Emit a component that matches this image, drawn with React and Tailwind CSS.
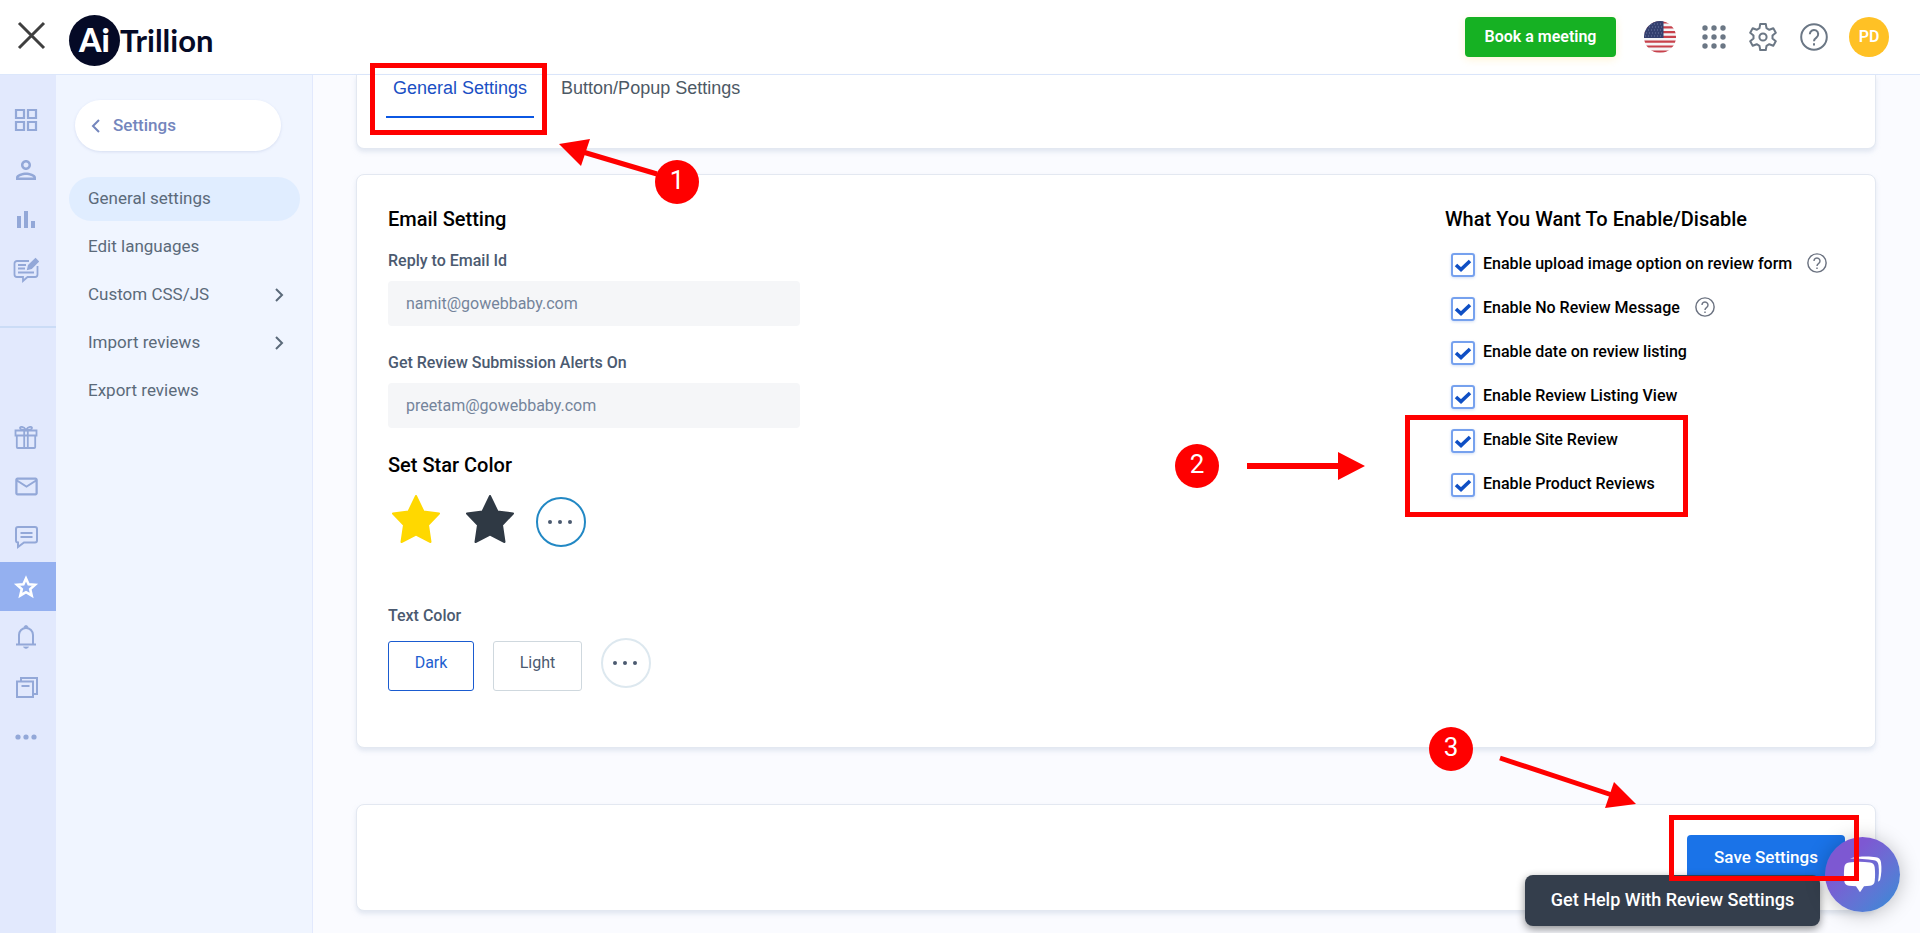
import React, { useState } from "react";
import { MdOutlineEmail, MdOutlinePerson } from "react-icons/md";

const menuItems = [
  { label: "General settings", active: true },
  { label: "Edit languages" },
  { label: "Custom CSS/JS", nested: true },
  { label: "Import reviews", nested: true },
  { label: "Export reviews" },
];

const reviewOptions = [
  { id: "upload", label: "Enable upload image option on review form", help: true },
  { id: "noreview", label: "Enable No Review Message", help: true },
  { id: "date", label: "Enable date on review listing" },
  { id: "listing", label: "Enable Review Listing View" },
  { id: "site", label: "Enable Site Review" },
  { id: "product", label: "Enable Product Reviews" },
];

/* --- ICONS --- */

function GridIcon() {
  return (
    <svg width="24" height="24" viewBox="0 0 24 24" fill="none" stroke="currentColor" strokeWidth="2.2">
      <path d="M2 2h8v8H2zM14 2h8v8h-8zM2 14h8v8H2zM14 14h8v8h-8z" />
    </svg>
  );
}

function BarsIcon() {
  return (
    <svg width="24" height="24" viewBox="0 0 24 24" fill="currentColor">
      <path d="M3 8h4v12H3zM10 3h4v17h-4zM17 13h4v7h-4z" />
    </svg>
  );
}

function ReviewIcon() {
  return (
    <svg width="26" height="26" viewBox="0 0 26 26" fill="none" stroke="currentColor" strokeWidth="1.8">
      <path d="M16 4H4a2.500 2.500 0 0 0-2.500 2.500v11A2.500 2.500 0 0 0 4 20h6v4l4.500-4H22a2.500 2.500 0 0 0 2.500-2.500V9" />
      <path d="M5 8h8M5 11.500h7M5 15.500h16" />
      <path d="M15 12l.8-3.500L22.500 2 25 4.500l-6.700 6.700z" fill="currentColor" />
    </svg>
  );
}

function GiftIcon() {
  return (
    <svg width="24" height="24" viewBox="0 0 24 24" fill="none" stroke="currentColor" strokeWidth="1.8">
      <path d="M1.500 5.500h21v5h-21zM2.800 10.500h18.400V22a1 1 0 0 1-1 1H3.800a1 1 0 0 1-1-1zM10.200 5.500V23M13.800 5.500V23" />
      <path d="M12 5C9 5 6 4.500 6 3s3.500-2 6 2c2.500-4 6-3.500 6-2s-3 2-6 2z" />
    </svg>
  );
}

function ChatLinesIcon() {
  return (
    <svg width="24" height="24" viewBox="0 0 24 24" fill="none" stroke="currentColor" strokeWidth="2">
      <path d="M4 2h17a2 2 0 0 1 2 2v11.500a2 2 0 0 1-2 2H10l-6 4.500v-4.500a2 2 0 0 1-2-2V4a2 2 0 0 1 2-2z" />
      <path d="M6.500 8h12M6.500 12h12" />
    </svg>
  );
}

function StarOutlineIcon() {
  return (
    <svg width="26" height="26" viewBox="0 0 26 26" fill="none" stroke="currentColor" strokeWidth="2.6">
      <path d="M13 4.500l2.600 5.700 6.400.6-4.800 4.300 1.500 6.400L13 18.200l-5.700 3.300 1.500-6.400L4 10.800l6.400-.6z" />
    </svg>
  );
}

function BellIcon() {
  return (
    <svg width="24" height="26" viewBox="0 0 24 26" fill="none" stroke="currentColor" strokeWidth="2">
      <path d="M2 20.500h20M5 20.500V11a7 7 0 0 1 14 0v9.500" />
      <path d="M10 3.500a2 2 0 0 1 4 0zM9.500 23h5l-1.500 1.200h-2z" fill="currentColor" strokeWidth="0.800" />
    </svg>
  );
}

function CardsIcon() {
  return (
    <svg width="24" height="24" viewBox="0 0 24 24" fill="none" stroke="currentColor" strokeWidth="2">
      <path d="M3 6.500h16V22H3zM7 6V3h16v16h-3.500M7.500 11h8" />
    </svg>
  );
}

function DotsIcon() {
  return (
    <svg width="22" height="6" viewBox="0 0 22 6" fill="currentColor">
      <circle cx="3" cy="3" r="2.600" />
      <circle cx="11" cy="3" r="2.600" />
      <circle cx="19" cy="3" r="2.600" />
    </svg>
  );
}

function SmallDots() {
  return (
    <svg width="26" height="6" viewBox="0 0 26 6" fill="#4b5a70">
      <circle cx="2" cy="3" r="2" />
      <circle cx="12" cy="3" r="2" />
      <circle cx="22" cy="3" r="2" />
    </svg>
  );
}

function Chevron({ left }) {
  return (
    <svg width="10" height="14" viewBox="0 0 10 14" fill="none" stroke="currentColor" strokeWidth="2">
      <path d={left ? "M8 1L2 7l6 6" : "M2 1l6 6-6 6"} />
    </svg>
  );
}

function HelpIcon({ size }) {
  return (
    <svg width={size} height={size} viewBox="0 0 28 28" fill="none" stroke="currentColor" strokeWidth="2">
      <circle cx="14" cy="14" r="12.800" />
      <path d="M9.800 11.200a4.200 4.200 0 1 1 6.600 3.400c-1.600 1.100-2.400 1.700-2.400 3.600" />
      <path d="M14 20.200v2.300" />
    </svg>
  );
}

function GearIcon() {
  return (
    <svg width="28" height="30" viewBox="0 0 28 30" fill="none" stroke="currentColor" strokeWidth="2" strokeLinejoin="round">
      <path d="M11.200 2h5.600l.7 4.200 2.800 1.600 4-1.500 2.500 4.400-3.300 2.800v3l3.300 2.800-2.500 4.400-4-1.500-2.800 1.600-.7 4.200h-5.600l-.7-4.200-2.800-1.600-4 1.500-2.500-4.400 3.300-2.800v-3L1.200 10.700l2.500-4.400 4 1.500 2.800-1.600z" />
      <circle cx="14" cy="15" r="3.600" />
    </svg>
  );
}

function FlagIcon() {
  return (
    <svg width="32" height="32" viewBox="0 0 32 32">
      <clipPath id="flag">
        <circle cx="16" cy="16" r="16" />
      </clipPath>
      <g clipPath="url(#flag)">
        <path fill="#f5f5f7" d="M0 0h32v32H0z" />
        <path stroke="#c8414b" strokeWidth="2.200" d="M0 1.500h32M0 6.300h32M0 11.100h32M0 15.900h32M0 20.700h32M0 25.500h32M0 30.500h32" />
        <path fill="#34406f" d="M0 0h19.500v17H0z" />
        <path stroke="#6f79a3" strokeWidth="1" strokeDasharray="1 2" d="M1 3h18M2 6h17M1 9h18M2 12h17M1 15h18" />
      </g>
    </svg>
  );
}

function AppsIcon() {
  return (
    <svg width="24" height="24" viewBox="0 0 24 24" fill="currentColor">
      {[3, 12, 21].map((y) =>
        [3, 12, 21].map((x) => <circle key={`${x}-${y}`} cx={x} cy={y} r="2.700" />)
      )}
    </svg>
  );
}

function StarShape({ color }) {
  return (
    <svg width="48" height="48" viewBox="0 0 48 48" fill={color} stroke={color} strokeWidth="2" strokeLinejoin="round">
      <path d="M24 1l7.500 15.500L47 18.500 36 30l2.500 17L24 39.500 9.500 47 12 30 1 18.500l15.500-2z" />
    </svg>
  );
}

const railTop = [
  { name: "Dashboard", icon: <GridIcon /> },
  { name: "Members", icon: <MdOutlinePerson size={30} /> },
  { name: "Reports", icon: <BarsIcon /> },
  { name: "Feedback", icon: <ReviewIcon /> },
];

const railBottom = [
  { name: "Loyalty", icon: <GiftIcon /> },
  { name: "Email", icon: <MdOutlineEmail size={27} /> },
  { name: "Messages", icon: <ChatLinesIcon /> },
  { name: "Reviews", icon: <StarOutlineIcon />, active: true },
  { name: "Notifications", icon: <BellIcon /> },
  { name: "Pages", icon: <CardsIcon /> },
  { name: "More", icon: <DotsIcon /> },
];

function RailButton({ item }) {
  return (
    <button
      aria-label={item.name}
      className={`w-full h-[49px] pr-1 flex items-center justify-center cursor-pointer ${item.active ? "bg-[#94b0f0] text-white" : "text-[#93a8d8]"}`}
    >
      {item.icon}
    </button>
  );
}

function Header() {
  return (
    <header className="h-[75px] shrink-0 bg-white border-b border-[#dce7fb] flex items-center justify-between pl-4 pr-[31px]">
      <div className="flex items-center">
        <button aria-label="Close" className="cursor-pointer pb-1">
          <svg width="31" height="31" viewBox="0 0 31 31" stroke="#3f3f3f" strokeWidth="3">
            <path d="M3 3l25 25M28 3L3 28" />
          </svg>
        </button>
        <a href="#home" className="flex items-center ml-[22px] mt-[6px] font-['Lato',sans-serif] text-[#050a26]">
          <span className="w-[51px] h-[51px] rounded-full bg-[#050a26] text-white text-[32px] font-black flex items-center justify-center">
            Ai
          </span>
          <span className="text-[31px] leading-10 font-bold">Trillion</span>
        </a>
      </div>

      <div className="flex items-center text-[#6b7785]">
        <button className="w-[151px] h-10 rounded bg-[#16b123] text-white text-[16px] font-semibold shadow-[0_2px_8px_rgba(255,193,37,0.200)] cursor-pointer">
          Book a meeting
        </button>
        <button aria-label="Language" className="ml-7 cursor-pointer">
          <FlagIcon />
        </button>
        <button aria-label="Apps" className="ml-[26px] cursor-pointer">
          <AppsIcon />
        </button>
        <button aria-label="Settings" className="ml-[23px] cursor-pointer">
          <GearIcon />
        </button>
        <button aria-label="Help" className="ml-[23px] cursor-pointer">
          <HelpIcon size={28} />
        </button>
        <button className="ml-[21px] w-10 h-10 rounded-full bg-[#ffc125] text-white text-[16px] font-semibold cursor-pointer">
          PD
        </button>
      </div>
    </header>
  );
}

function Sidebar() {
  return (
    <aside className="w-[257px] shrink-0 bg-[#f0f5ff] border-r border-[#e2e9fd] pt-[25px] pl-[13px] pr-3">
      <button className="w-[206px] h-[51px] ml-[6px] pl-4 rounded-full bg-white shadow-[0_1px_3px_rgba(116,134,189,0.200)] text-[#7486bd] text-[17px] font-medium flex items-center gap-3 cursor-pointer">
        <Chevron left />
        Settings
      </button>
      <nav className="mt-[26px] flex flex-col gap-1">
        {menuItems.map((item) => (
          <a
            key={item.label}
            href="#menu"
            className={`h-11 pl-[19px] pr-4 rounded-full text-[17px] text-[#5b6a7a] flex items-center justify-between ${item.active ? "bg-[#e0edff]" : ""}`}
          >
            {item.label}
            {item.nested && <Chevron />}
          </a>
        ))}
      </nav>
    </aside>
  );
}

function Badge({ number, className }) {
  return (
    <div className={`absolute w-11 h-11 pb-1 rounded-full bg-[#ff0000] text-white text-[26px] flex items-center justify-center ${className}`}>
      {number}
    </div>
  );
}

/* --- STEP MARKERS --- */
function Steps() {
  return (
    <div className="absolute inset-0 z-20 pointer-events-none">
      <div className="absolute left-[370px] top-[63px] w-[177px] h-[72px] border-5 border-[#ff0000]" />
      <svg className="absolute left-[559px] top-[136px]" width="100" height="44" viewBox="0 0 100 44" fill="#ff0000">
        <path d="M0 8l31-5-9 27z" />
        <path d="M24 16l74 22" stroke="#ff0000" strokeWidth="5" />
      </svg>
      <Badge number="1" className="left-[655px] top-[160px]" />

      <Badge number="2" className="right-[701px] top-[444px]" />
      <svg className="absolute right-[555px] top-[452px]" width="118" height="28" viewBox="0 0 118 28" fill="#ff0000">
        <path d="M0 11h92v6H0zM91 0l27 14-27 14z" />
      </svg>
      <div className="absolute right-[232px] top-[415px] w-[283px] h-[102px] border-5 border-[#ff0000]" />

      <Badge number="3" className="right-[447px] top-[727px]" />
      <svg className="absolute right-[284px] top-[754px]" width="138" height="56" viewBox="0 0 138 56" fill="#ff0000">
        <path d="M138 50l-22-22-9 26z" />
        <path d="M2 4l112 37" stroke="#ff0000" strokeWidth="5" />
      </svg>
      <div className="absolute right-[61px] top-[815px] w-[190px] h-[66px] border-5 border-[#ff0000]" />
    </div>
  );
}

function App() {
  const [tab, setTab] = useState("general");
  const [replyEmail, setReplyEmail] = useState("namit@gowebbaby.com");
  const [alertEmail, setAlertEmail] = useState("preetam@gowebbaby.com");
  const [enabled, setEnabled] = useState(reviewOptions.map((o) => o.id));

  const toggle = (id) =>
    setEnabled(enabled.includes(id) ? enabled.filter((e) => e !== id) : [...enabled, id]);

  return (
    <div className="relative h-screen flex flex-col overflow-hidden font-['Roboto',sans-serif] text-[16px]">
      <Header />

      <div className="flex flex-1 min-h-0">
        <div className="w-14 shrink-0 bg-[#e2e9fd] pt-5 flex flex-col gap-px">
          {railTop.map((item) => (
            <RailButton key={item.name} item={item} />
          ))}
          <hr className="mt-[31px] mb-[83px] border-t-2 border-[#cbdcf6]" />
          {railBottom.map((item) => (
            <RailButton key={item.name} item={item} />
          ))}
        </div>

        <Sidebar />

        <main className="flex-1 min-w-0 bg-[#fafbff] pl-[43px] pr-11">
          {/* Tabs */}
          <div className="h-[74px] bg-white border border-t-0 border-[#e3e8f1] rounded-b-lg shadow-[0_3px_4px_rgba(203,213,230,0.500)] pl-[29px] flex items-start gap-5 font-['Liberation_Sans',sans-serif] text-[18px]">
            <button
              onClick={() => setTab("general")}
              className={`h-[43px] px-[7px] pb-[17px] border-b-2 cursor-pointer ${tab === "general" ? "border-[#0b57e3] text-[#1a4fc4]" : "border-transparent text-[#4d5965]"}`}
            >
              General Settings
            </button>
            <button
              onClick={() => setTab("popup")}
              className={`h-[43px] px-[7px] pb-[17px] border-b-2 cursor-pointer ${tab === "popup" ? "border-[#0b57e3] text-[#1a4fc4]" : "border-transparent text-[#4d5965]"}`}
            >
              Button/Popup Settings
            </button>
          </div>

          {/* Settings */}
          <div className="mt-[25px] h-[574px] bg-white border border-[#e3e8f1] rounded-lg shadow-[0_3px_4px_rgba(203,213,230,0.500)] pt-[30px] pl-[31px] flex justify-between">
            <section className="w-[412px] text-[#4b5a70]">
              <h2 className="text-[20px] leading-7 font-medium text-black">Email Setting</h2>
              <label htmlFor="reply" className="block mt-4 leading-6 font-medium">
                Reply to Email Id
              </label>
              <input
                id="reply"
                type="email"
                value={replyEmail}
                onChange={(e) => setReplyEmail(e.target.value)}
                className="block mt-2 w-full h-[45px] px-[18px] rounded bg-[#f5f6f8] text-[#74849b] outline-none"
              />
              <label htmlFor="alerts" className="block mt-[25px] leading-6 font-medium">
                Get Review Submission Alerts On
              </label>
              <input
                id="alerts"
                type="email"
                value={alertEmail}
                onChange={(e) => setAlertEmail(e.target.value)}
                className="block mt-2 w-full h-[45px] px-[18px] rounded bg-[#f5f6f8] text-[#74849b] outline-none"
              />

              <h2 className="mt-[23px] text-[20px] leading-7 font-medium text-black">Set Star Color</h2>
              <div className="mt-4 pl-1 flex items-start">
                <button aria-label="Yellow star" className="cursor-pointer">
                  <StarShape color="#ffd800" />
                </button>
                <button aria-label="Dark star" className="ml-[26px] cursor-pointer">
                  <StarShape color="#2f3944" />
                </button>
                <button
                  aria-label="More star colors"
                  className="ml-[22px] mt-[2px] w-[50px] h-[50px] rounded-full border-2 border-[#2288c4] flex items-center justify-center cursor-pointer"
                >
                  <SmallDots />
                </button>
              </div>

              <h3 className="mt-[57px] leading-6 font-medium">Text Color</h3>
              <div className="mt-[10px] flex items-start">
                <button className="mt-[3px] w-[86px] h-[50px] pb-[6px] rounded-[3px] border border-[#1a5bd0] text-[#1f5fd0] cursor-pointer">
                  Dark
                </button>
                <button className="ml-[19px] mt-[3px] w-[89px] h-[50px] pb-[6px] rounded-[3px] border border-[#cfd8de] cursor-pointer">
                  Light
                </button>
                <button
                  aria-label="More text colors"
                  className="ml-[19px] w-[50px] h-[50px] rounded-full border-2 border-[#dde8ef] flex items-center justify-center cursor-pointer"
                >
                  <SmallDots />
                </button>
              </div>
            </section>

            <section className="w-[430px] text-black">
              <h2 className="text-[20px] leading-7 font-medium">What You Want To Enable/Disable</h2>
              <ul className="mt-[9px] pl-[6px]">
                {reviewOptions.map((option) => (
                  <li key={option.id} className="h-11 flex items-center">
                    <span className="relative mt-[2px] w-6 h-6 shrink-0">
                      <input
                        id={option.id}
                        type="checkbox"
                        checked={enabled.includes(option.id)}
                        onChange={() => toggle(option.id)}
                        className="peer block appearance-none w-6 h-6 rounded-[3px] border-2 border-[#76a1ee] bg-white shadow-[0_1px_3px_rgba(26,91,208,0.200)] cursor-pointer"
                      />
                      <svg className="absolute inset-0 hidden peer-checked:block pointer-events-none" width="24" height="24" viewBox="0 0 24 24" fill="none" stroke="#0f4fc4" strokeWidth="3.6">
                        <path d="M5 12l5 4.500L19 8" />
                      </svg>
                    </span>
                    <label htmlFor={option.id} className="ml-2 font-medium cursor-pointer">
                      {option.label}
                    </label>
                    {option.help && (
                      <button aria-label="More info" className="ml-[15px] mb-[3px] text-[#6b7280] cursor-pointer">
                        <HelpIcon size={20} />
                      </button>
                    )}
                  </li>
                ))}
              </ul>
            </section>
          </div>

          {/* Save bar */}
          <div className="mt-[56px] h-[107px] bg-white border border-[#e3e8f1] rounded-lg shadow-[0_3px_4px_rgba(203,213,230,0.500)] pt-[30px] pr-[30px] flex items-start justify-end">
            <button className="w-[158px] h-[46px] rounded bg-[#1a73e8] text-white text-[17px] font-medium cursor-pointer">
              Save Settings
            </button>
          </div>
        </main>
      </div>

      {/* Floating help */}
      <button className="absolute z-10 right-[100px] top-[875px] w-[295px] h-[51px] pb-[2px] rounded-lg bg-[#343e4c] text-white text-[18px] font-medium shadow-[0_3px_8px_rgba(0,0,0,0.450)] cursor-pointer">
        Get Help With Review Settings
      </button>
      <button
        aria-label="Open chat"
        className="absolute z-10 right-5 top-[837px] w-[75px] h-[75px] rounded-full bg-linear-to-br from-[#7d58d2] from-30% to-[#3d86d6] to-90% shadow-[0_2px_20px_rgba(0,0,0,0.250)] flex items-center justify-center cursor-pointer"
      >
        <svg width="40" height="40" viewBox="0 0 40 40" fill="#fff">
          <path d="M7 3.500C15 1 27 1.200 33 2.200c3 .6 4.500 2 5 5 .8 6 .5 12-1 18l-2 1.500c1-6 1.200-11 .5-16.500-.4-3-1.700-4.500-4.500-5C24 4 15 3.500 7 3.500z" />
          <path d="M6 7.500c7-1 14-1 21 0 3 .4 4.400 2 4.700 4.700.5 5 .5 9 0 13.800-.3 3-1.700 4.300-4.700 4.700l-6 .6-4 6-4-6-7-.6C3 30.300 1.600 29 1.300 26c-.5-5-.5-9 0-13.800C1.600 9.500 3 8 6 7.500z" />
        </svg>
      </button>

      <Steps />
    </div>
  );
}

export default App;
